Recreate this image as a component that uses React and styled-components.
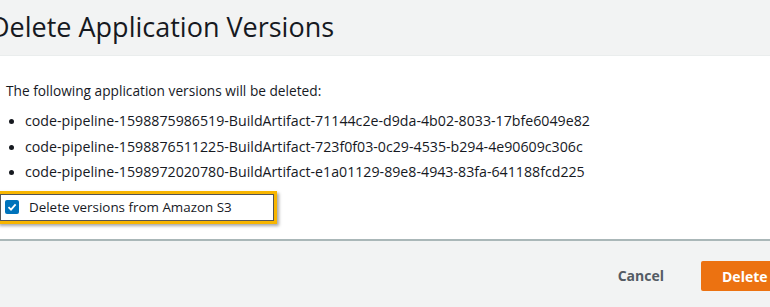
import React from 'react';
import styled, { createGlobalStyle } from 'styled-components';

const Global = createGlobalStyle`
  html, body {
    margin: 0;
    padding: 0;
    background: #ffffff;
    overflow: hidden;
  }
  body {
    font-family: "Open Sans", "Noto Sans", Arial, sans-serif;
    color: #16191f;
  }
`;

const Modal = styled.div`
  width: 770px;
  height: 307px;
  display: flex;
  flex-direction: column;
`;

const Header = styled.div`
  height: 56px;
  background: #f2f3f3;
  border-bottom: 1px solid #eaeded;
  display: flex;
  align-items: center;
  box-sizing: border-box;
  overflow: hidden;
`;

const Title = styled.h2`
  margin: 0 0 2px -10px;
  font-size: 27px;
  font-weight: 400;
  white-space: nowrap;
  color: #16191f;
`;

const Body = styled.div`
  flex: 1;
  padding: 26px 0 0 6px;
  border-bottom: 2px solid #aab7b8;
  font-size: 14px;
`;

const Intro = styled.p`
  margin: 0 0 12px;
  font-size: 13.7px;
  line-height: 18px;
`;

const List = styled.ul`
  margin: 0;
  padding: 0 0 0 19px;
  list-style: none;
`;

const Item = styled.li`
  position: relative;
  line-height: 18px;
  margin-bottom: 7.5px;
  font-size: 14.2px;
  white-space: nowrap;

  &::before {
    content: '';
    position: absolute;
    left: -16px;
    top: 7px;
    width: 5px;
    height: 5px;
    border-radius: 50%;
    background: #16191f;
  }
`;

const Highlight = styled.div`
  display: inline-flex;
  align-items: center;
  gap: 10px;
  margin: 2px 0 0 -9px;
  width: 280px;
  height: 33px;
  box-sizing: border-box;
  padding-left: 5px;
  border: 3px solid #f7b500;
  box-shadow: inset 0 0 0 1px #555, 2px 2px 3px rgba(0, 0, 0, 0.35);
  background: #fff;
`;

const Box = styled.span`
  width: 14px;
  height: 14px;
  border-radius: 2px;
  background: #0073bb;
  display: flex;
  align-items: center;
  justify-content: center;
`;

const Label = styled.span`
  font-size: 13.4px;
  color: #16191f;
`;

const Footer = styled.div`
  height: 66px;
  background: #f2f3f3;
  display: flex;
  align-items: center;
  justify-content: flex-end;
  gap: 37px;
`;

const Cancel = styled.span`
  font-weight: 700;
  font-size: 14px;
  color: #545b64;
  margin-top: 2px;
`;

const DeleteButton = styled.button`
  background: #ec7211;
  color: #fff;
  border: none;
  border-radius: 2px;
  height: 30px;
  width: 80px;
  margin-right: -11px;
  margin-top: 4px;
  padding: 0 0 0 21px;
  text-align: left;
  font-family: inherit;
  font-weight: 700;
  font-size: 14px;
`;

const versions = [
  'code-pipeline-1598875986519-BuildArtifact-71144c2e-d9da-4b02-8033-17bfe6049e82',
  'code-pipeline-1598876511225-BuildArtifact-723f0f03-0c29-4535-b294-4e90609c306c',
  'code-pipeline-1598972020780-BuildArtifact-e1a01129-89e8-4943-83fa-641188fcd225',
];

export default function App() {
  return (
    <Modal>
      <Global />
      <Header>
        <Title>Delete Application Versions</Title>
      </Header>
      <Body>
        <Intro>The following application versions will be deleted:</Intro>
        <List>
          {versions.map((v) => (
            <Item key={v}>{v}</Item>
          ))}
        </List>
        <Highlight>
          <Box>
            <svg width="10" height="10" viewBox="0 0 10 10">
              <path d="M1.5 5.2 L4 7.6 L8.6 2.4" fill="none" stroke="#fff" strokeWidth="1.8" />
            </svg>
          </Box>
          <Label>Delete versions from Amazon S3</Label>
        </Highlight>
      </Body>
      <Footer>
        <Cancel>Cancel</Cancel>
        <DeleteButton>Delete</DeleteButton>
      </Footer>
    </Modal>
  );
}
